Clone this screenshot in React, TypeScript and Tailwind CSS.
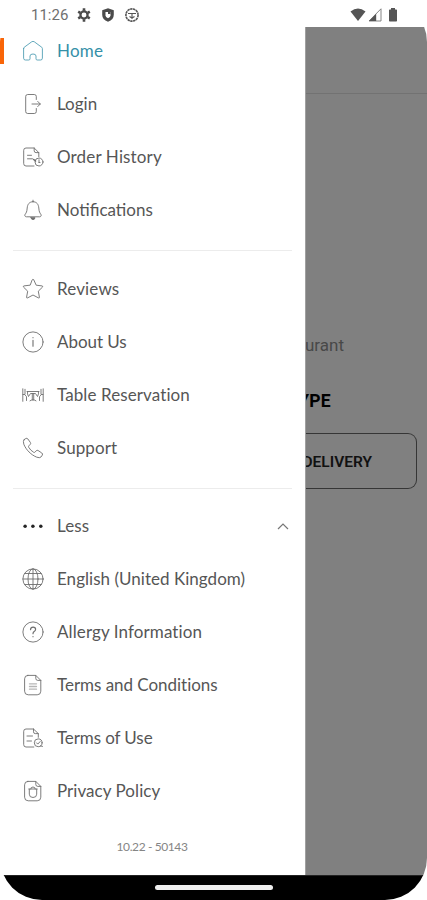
import React from "react";

type IconProps = { children: React.ReactNode };

function Icon({ children }: IconProps) {
  return (
    <svg
      viewBox="0 0 22 22"
      className="h-[22px] w-[22px] shrink-0 opacity-85"
      fill="none"
      stroke="currentColor"
      strokeWidth="0.9"
      strokeLinecap="round"
      strokeLinejoin="round"
    >
      {children}
    </svg>
  );
}

const home = (
  <Icon>
    <path d="M1.600 8.600v9.600q0 1.800 1.800 1.800h3.400q1.200 0 1.200-1.200V16q0-2 3-2t3 2v2.800q0 1.200 1.200 1.200h3.400q1.800 0 1.800-1.800V8.600q0-.8-.6-1.300l-7.500-5.500q-1.300-.9-2.600 0L2.200 7.300q-.6.500-.6 1.300Z" />
  </Icon>
);
const login = (
  <Icon>
    <path d="M14.300 6.500V3.500q0-2-2-2H5.700q-2 0-2 2v15q0 2 2 2h6.600q2 0 2-2v-3M10 11h8.300M15.700 8.400l2.600 2.600-2.600 2.600" />
  </Icon>
);
const history = (
  <Icon>
    <path d="M12 20H4Q1.700 20 1.700 17.600V4.300Q1.700 2 4 2h8.200l4.600 4.600v4M12.200 2v2.800q0 1.800 1.800 1.800h2.800M5.500 9.300h4M5.500 12.800h5" />
    <circle cx="17" cy="16" r="4" />
    <path d="M17 13.800v2.700M17 16.500h1" />
    <path d="M11.700 13.500l1.800 1.500" strokeWidth="1.600" />
  </Icon>
);
const bell = (
  <Icon>
    <path d="M11 1.200v1.500M11 2.700C7 2.700 5.500 5.600 5.200 9c-.3 4-1 4.800-2 6.200-.9 1.300-.2 2.600 1.200 2.600h13.200c1.400 0 2.100-1.300 1.200-2.600-1-1.400-1.700-2.200-2-6.200-.3-3.400-1.800-6.300-5.800-6.300Z" />
    <path d="M9 18.700h4Q12.700 20.600 11 20.600t-2-1.900Z" fill="currentColor" />
  </Icon>
);
const star = (
  <Icon>
    <path d="M10.300 1.700q.7-1.200 1.400 0l2.500 5.500 5.800.7q1.200.3.500 1.200l-4.200 4.100 1.100 5.900q.1 1.300-1 .8L11 17l-5.400 2.900q-1.100.5-1-.8l1.100-5.900-4.200-4.100q-.7-.9.500-1.200l5.800-.7Z" />
  </Icon>
);
const info = (
  <Icon>
    <circle cx="11" cy="11" r="10.100" />
    <path d="M11 9.200v6M11 6.500v.3" strokeWidth="1.100" />
  </Icon>
);
const table = (
  <Icon>
    <path d="M.800 4.800v12.500M3 5.300V10.500H1M3.200 11.300 4.500 12.500v4M21.200 4.800v12.500M19 5.300V10.500H21M18.800 11.300 17.500 12.500v4M5 7.500h12M5.500 7.600Q5 10 6.500 12.500L8.500 9.500h5l2 3Q17 10 16.500 7.600M10.300 9.500v6.500M11.700 9.500v6.500M8 16.800q1.300-1 3-1t3 1" />
  </Icon>
);
const phone = (
  <Icon>
    <path d="m2 2.800 1.800-1.300q1.200-.7 2.100.5l2.500 3.500q.7 1.100-.3 2L7 8.700q-.8.700-.3 1.600 1.800 3.200 5 5 .9.500 1.500-.4l1-1.100q.8-1 1.900-.3l3.700 2.500q1.300.9.500 2.100L19 20q-1.300 1.300-4.200.2C9.200 18 4 12.800 1.800 7.200Q.8 4.200 2 2.800Z" />
  </Icon>
);
const dots = (
  <Icon>
    <g fill="black" stroke="none">
      <circle cx="3.100" cy="11.300" r="1.750" />
      <circle cx="10.900" cy="11.300" r="1.750" />
      <circle cx="18.800" cy="11.300" r="1.750" />
    </g>
  </Icon>
);
const globe = (
  <Icon>
    <circle cx="11" cy="11" r="10.100" />
    <ellipse cx="11" cy="11" rx="5" ry="10.100" />
    <path d="M.9 11h20.200M11 .9v20.200M2.700 5.500h16.600M2.700 16.500h16.600" />
  </Icon>
);
const question = (
  <Icon>
    <circle cx="11" cy="11" r="10.100" />
    <path d="M8.500 8.600q.2-2.500 2.600-2.500 2.500 0 2.500 2.200 0 1.400-1.400 2.200-1.200.7-1.200 2.200M11 15.500v.2" strokeWidth="1.200" />
  </Icon>
);
const documentLines = (
  <Icon>
    <path d="M5.800 1.400h8l5 5v10.800q0 3.600-3.600 3.600H6.200q-3.600 0-3.600-3.600V4.800q0-3.400 3.200-3.400ZM13.800 1.400v3q0 2 2 2h3" />
    <path d="M7.500 9.800h7M7.500 12.500h7M7.500 15.200h7" strokeWidth="1.300" opacity=".5" />
  </Icon>
);
const terms = (
  <Icon>
    <path d="M11.800 20H4Q1.700 20 1.700 17.600V4.300Q1.700 2 4 2h7.500l4.800 4.600v3.700M11.500 2v2.800q0 1.800 1.800 1.800h3M5 9h5.500M5 14h4.500" />
    <circle cx="16.200" cy="15.800" r="3.900" />
    <path d="m14.500 15.800 1.300 1.300 2.400-2.600M18.500 18.900l2 .5" />
  </Icon>
);
const privacy = (
  <Icon>
    <path d="M5.800 1.400h8l5 5v10.800q0 3.600-3.600 3.600H6.200q-3.600 0-3.600-3.600V4.800q0-3.400 3.200-3.400ZM13.800 1.400v3q0 2 2 2h3" />
    <path d="M6.800 9h8.400M7.300 9.200v5q0 3.300 3.700 3.300t3.700-3.300v-5M8.700 9q0-2 2.300-2t2.300 2" />
  </Icon>
);

type RowProps = {
  icon: React.ReactNode;
  label: string;
  spacing: string;
  active?: boolean;
  expanded?: boolean;
};

function Row({ icon, label, spacing, active, expanded }: RowProps) {
  return (
    <li className={`relative flex flex-1 items-center pl-[22px] ${active ? "text-[#3590a8]" : "text-[#565656]"}`}>
      {active && <span className="absolute left-0 h-[26px] w-1 bg-[#f96508]" />}
      {icon}
      <span className={`ml-[13px] text-[17px] leading-6 whitespace-nowrap ${spacing}`}>{label}</span>
      {expanded && (
        <svg viewBox="0 0 12 8" className="mr-4 ml-auto h-2 w-3" fill="none" stroke="#777" strokeWidth="1.200">
          <path d="m1 7 5-5 5 5" />
        </svg>
      )}
    </li>
  );
}

function StatusBar() {
  return (
    <header className="flex h-[27px] shrink-0 items-center bg-white pt-[2px] pl-[31px] text-[#555]">
      <span className="w-[38px] font-[Roboto] text-[15px] leading-5 text-[#707070]">11:26</span>
      <svg viewBox="0 0 14 14" className="ml-2 h-[14px] w-[14px]" fill="none" stroke="#4b4b4b">
        <circle cx="7" cy="7" r="3.600" strokeWidth="2.300" />
        <path d="M7 .3v2.500M7 11.200v2.500M1.200 3.700l2.100 1.200M10.700 9.100l2.100 1.200M1.200 10.300l2.100-1.200M10.700 4.900l2.100-1.200" strokeWidth="2.600" />
      </svg>
      <svg viewBox="0 0 14 14" className="ml-[10px] h-[14px] w-[14px]">
        <path d="M7 .2 12.800 2.200v4.500q0 4.900-5.800 7.100-5.800-2.200-5.800-7.100V2.200Z" fill="#4b4b4b" />
        <path d="M4.500 4h5v3.300q0 2-2.500 3-2.500-1-2.500-3Z" fill="white" />
        <path d="M7 4h2.500v2H7Z" fill="#4b4b4b" />
      </svg>
      <svg viewBox="0 0 14 14" className="ml-[10px] h-[14px] w-[14px]" fill="none" stroke="#555">
        <circle cx="7" cy="7" r="6.100" strokeWidth="1.600" strokeDasharray="2.400 .5" />
        <path d="M3 5.500h8M7 5.500v5.500M4.500 8.500 7 10l2.500-1.500" strokeWidth="1.100" />
      </svg>
      <svg viewBox="0 0 16 14" className="ml-[211px] h-[14px] w-4">
        <path d="M.5 3.600Q8-2.700 15.500 3.600L8 13Z" fill="#555" />
      </svg>
      <svg viewBox="0 0 14 14" className="ml-[2px] h-[14px] w-[14px]">
        <path d="M13 .8V13H1Z" fill="white" stroke="#777" strokeWidth=".9" />
        <path d="M8.200 5.800V13H1Z" fill="#555" />
      </svg>
      <svg viewBox="0 0 10 14" className="ml-[6px] h-[14px] w-[10px]">
        <path d="M3 0h4v1.500h1.300q.7 0 .7.700v10.600q0 .7-.7.700H1.700q-.7 0-.7-.7V2.200q0-.7.700-.7H3Z" fill="#555" />
      </svg>
    </header>
  );
}

export default function App() {
  return (
    <div className="h-[900px] w-[427px] bg-white font-[Lato,sans-serif]">
      <div className="flex h-full flex-col overflow-hidden rounded-[42px]">
        <StatusBar />
        <div className="flex h-[848px] shrink-0">
          <nav className="flex w-[305px] shrink-0 flex-col bg-white">
            <ul className="-mt-[2px] flex h-[211px] shrink-0 flex-col">
              <Row icon={home} label="Home" spacing="tracking-[0.2px]" active />
              <Row icon={login} label="Login" spacing="tracking-normal" />
              <Row icon={history} label="Order History" spacing="tracking-[0.15px]" />
              <Row icon={bell} label="Notifications" spacing="tracking-normal" />
            </ul>
            <hr className="mx-[13px] mt-[14px] border-[#ececec]" />
            <ul className="mt-[11px] flex h-[213px] shrink-0 flex-col">
              <Row icon={star} label="Reviews" spacing="tracking-[0.15px]" />
              <Row icon={info} label="About Us" spacing="tracking-[-0.05px]" />
              <Row icon={table} label="Table Reservation" spacing="tracking-[0.1px]" />
              <Row icon={phone} label="Support" spacing="tracking-[0.1px]" />
            </ul>
            <hr className="mx-[13px] mt-[13px] border-[#ececec]" />
            <ul className="mt-[10px] flex h-[319px] shrink-0 flex-col">
              <Row icon={dots} label="Less" spacing="tracking-[0.1px]" expanded />
              <Row icon={globe} label="English (United Kingdom)" spacing="tracking-[0.03px]" />
              <Row icon={question} label="Allergy Information" spacing="tracking-[0.1px]" />
              <Row icon={documentLines} label="Terms and Conditions" spacing="tracking-[-0.03px]" />
              <Row icon={terms} label="Terms of Use" spacing="tracking-[-0.1px]" />
              <Row icon={privacy} label="Privacy Policy" spacing="tracking-[0.05px]" />
            </ul>
            <p className="mt-[21px] pr-px text-center text-[12px] leading-4 tracking-[-0.4px] text-[#858585]">10.22 - 50143</p>
          </nav>
          <main className="flex w-[122px] flex-col overflow-hidden border-l border-[#a0a0a0] bg-[#808080]">
            <div className="h-[67px] shrink-0 border-b border-[#727272]" />
            <div className="mt-[239px] flex h-6 w-[38px] items-center justify-end pt-px font-[Roboto] text-[17px] whitespace-nowrap text-[#484848]">
              restaurant
            </div>
            <h2 className="mt-8 flex h-6 w-[25px] items-center justify-end font-[Roboto] text-[17.5px] font-bold tracking-[0.3px] whitespace-nowrap text-black">
              TYPE
            </h2>
            <div className="mt-[20px] flex h-[56px] w-[111px] shrink-0 items-center justify-end rounded-r-[9px] border border-l-0 border-[#363636] pt-[3px] pr-[44px]">
              <span className="font-[Roboto] text-[15.5px] font-semibold text-[#111]">DELIVERY</span>
            </div>
          </main>
        </div>
        <footer className="flex h-[25px] shrink-0 justify-center border-t border-[#222] bg-black pt-[9px]">
          <span className="h-[5px] w-[118px] rounded-full bg-[#eee]" />
        </footer>
      </div>
    </div>
  );
}
